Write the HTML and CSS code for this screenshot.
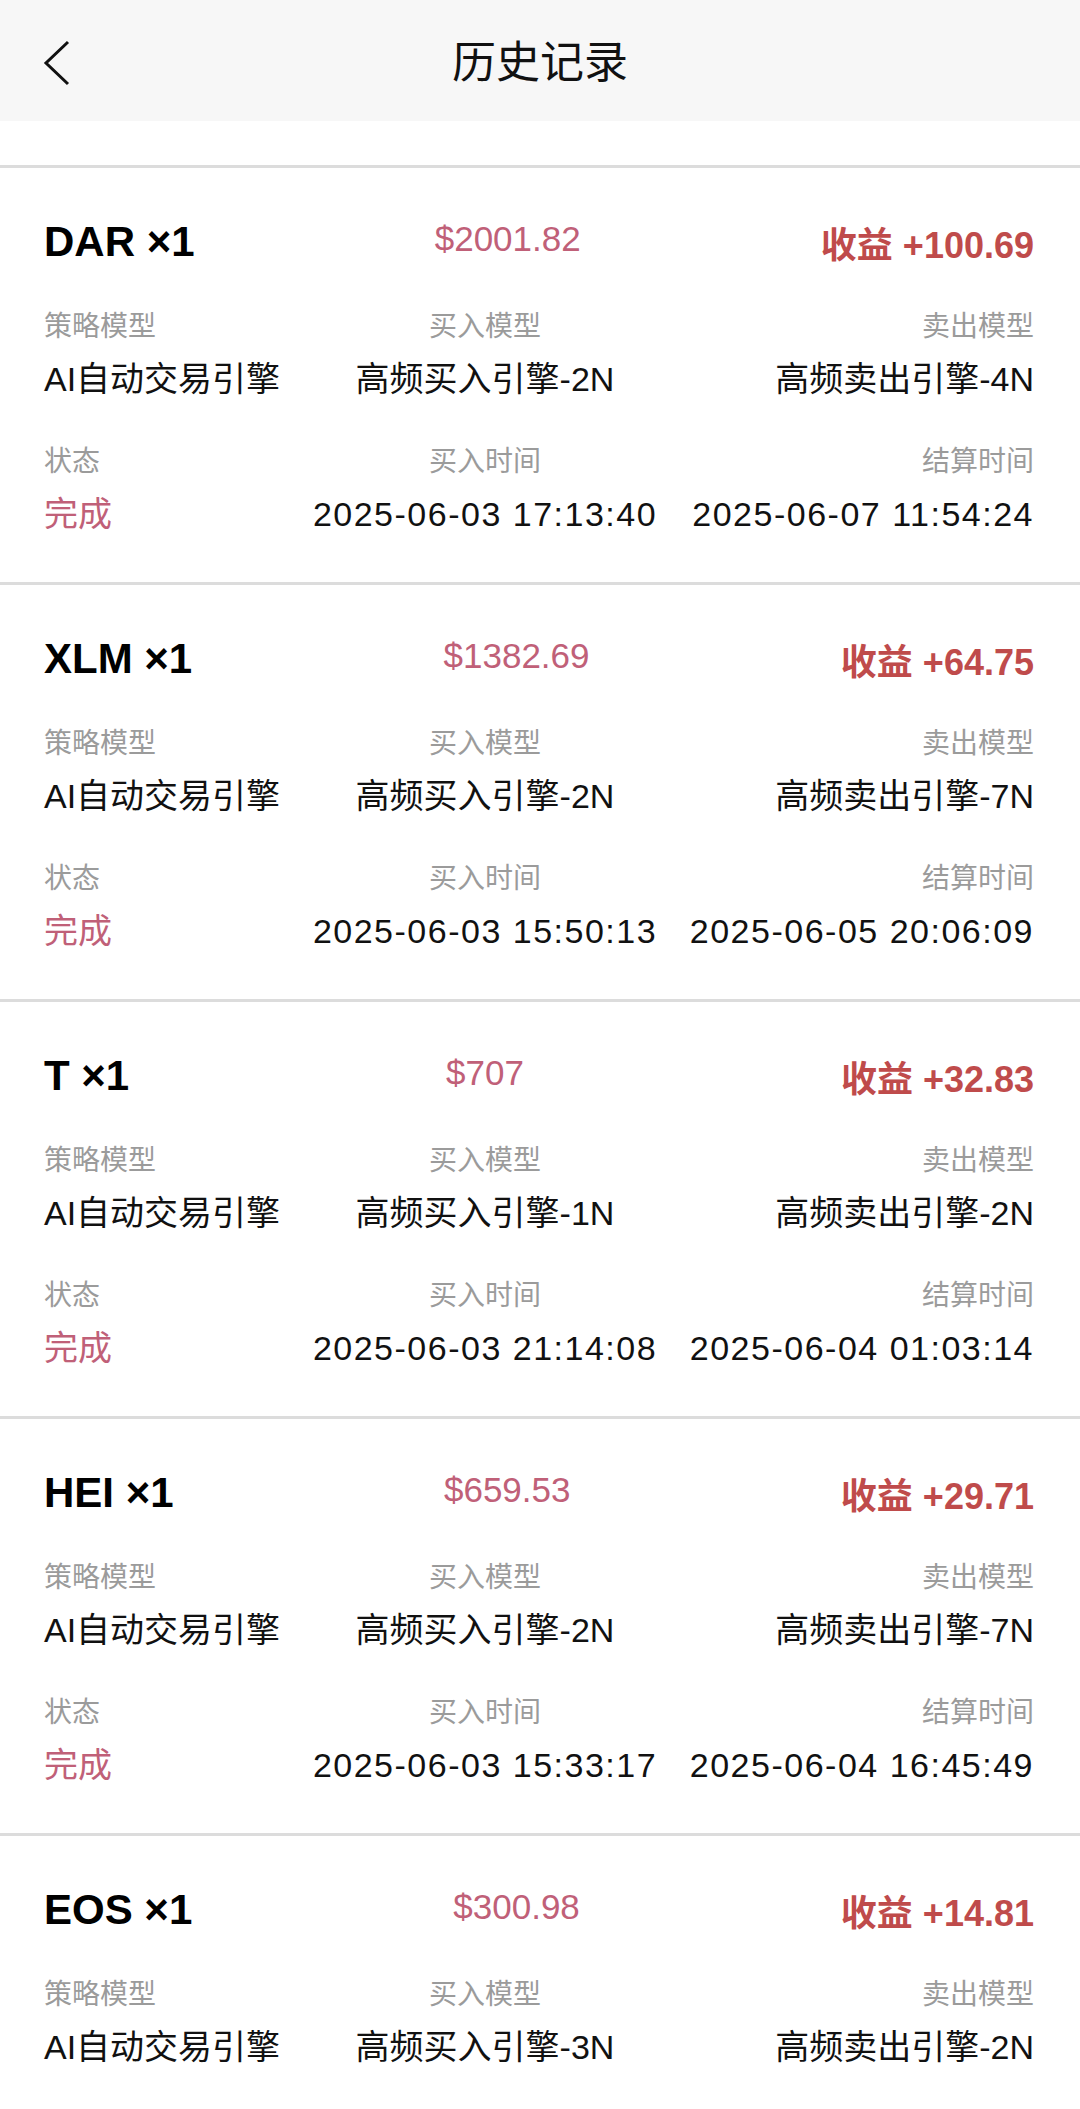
FILE: index.html
```html
<!DOCTYPE html>
<html lang="zh-CN">
<head>
    <meta charset="UTF-8">
    <meta name="viewport" content="width=device-width, initial-scale=1.0">
    <title>历史记录</title>
    <link rel="stylesheet" href="styles.css">
</head>
<body>
    <div class="nav-bar">
        <div class="nav-back">
            <svg width="28" height="46" viewBox="0 0 28 46">
                <polyline points="25,2 3,23 25,44" fill="none" stroke="#111" stroke-width="3" stroke-linejoin="miter"/>
            </svg>
        </div>
        <div class="nav-title">历史记录</div>
        <div></div>
    </div>

    <div class="record-list">
        <div class="record">
            <div class="record-head">
                <span class="symbol">DAR ×1</span>
                <span class="price">$2001.82</span>
                <span class="profit">收益 +100.69</span>
            </div>
            <div class="fields">
                <div class="field"><div class="label">策略模型</div><div class="value">AI自动交易引擎</div></div>
                <div class="field"><div class="label">买入模型</div><div class="value">高频买入引擎-2N</div></div>
                <div class="field"><div class="label">卖出模型</div><div class="value">高频卖出引擎-4N</div></div>
            </div>
            <div class="fields">
                <div class="field"><div class="label">状态</div><div class="value done">完成</div></div>
                <div class="field"><div class="label">买入时间</div><div class="value time">2025-06-03 17:13:40</div></div>
                <div class="field"><div class="label">结算时间</div><div class="value time">2025-06-07 11:54:24</div></div>
            </div>
        </div>

        <div class="record">
            <div class="record-head">
                <span class="symbol">XLM ×1</span>
                <span class="price">$1382.69</span>
                <span class="profit">收益 +64.75</span>
            </div>
            <div class="fields">
                <div class="field"><div class="label">策略模型</div><div class="value">AI自动交易引擎</div></div>
                <div class="field"><div class="label">买入模型</div><div class="value">高频买入引擎-2N</div></div>
                <div class="field"><div class="label">卖出模型</div><div class="value">高频卖出引擎-7N</div></div>
            </div>
            <div class="fields">
                <div class="field"><div class="label">状态</div><div class="value done">完成</div></div>
                <div class="field"><div class="label">买入时间</div><div class="value time">2025-06-03 15:50:13</div></div>
                <div class="field"><div class="label">结算时间</div><div class="value time">2025-06-05 20:06:09</div></div>
            </div>
        </div>

        <div class="record">
            <div class="record-head">
                <span class="symbol">T ×1</span>
                <span class="price">$707</span>
                <span class="profit">收益 +32.83</span>
            </div>
            <div class="fields">
                <div class="field"><div class="label">策略模型</div><div class="value">AI自动交易引擎</div></div>
                <div class="field"><div class="label">买入模型</div><div class="value">高频买入引擎-1N</div></div>
                <div class="field"><div class="label">卖出模型</div><div class="value">高频卖出引擎-2N</div></div>
            </div>
            <div class="fields">
                <div class="field"><div class="label">状态</div><div class="value done">完成</div></div>
                <div class="field"><div class="label">买入时间</div><div class="value time">2025-06-03 21:14:08</div></div>
                <div class="field"><div class="label">结算时间</div><div class="value time">2025-06-04 01:03:14</div></div>
            </div>
        </div>

        <div class="record">
            <div class="record-head">
                <span class="symbol">HEI ×1</span>
                <span class="price">$659.53</span>
                <span class="profit">收益 +29.71</span>
            </div>
            <div class="fields">
                <div class="field"><div class="label">策略模型</div><div class="value">AI自动交易引擎</div></div>
                <div class="field"><div class="label">买入模型</div><div class="value">高频买入引擎-2N</div></div>
                <div class="field"><div class="label">卖出模型</div><div class="value">高频卖出引擎-7N</div></div>
            </div>
            <div class="fields">
                <div class="field"><div class="label">状态</div><div class="value done">完成</div></div>
                <div class="field"><div class="label">买入时间</div><div class="value time">2025-06-03 15:33:17</div></div>
                <div class="field"><div class="label">结算时间</div><div class="value time">2025-06-04 16:45:49</div></div>
            </div>
        </div>

        <div class="record">
            <div class="record-head">
                <span class="symbol">EOS ×1</span>
                <span class="price">$300.98</span>
                <span class="profit">收益 +14.81</span>
            </div>
            <div class="fields">
                <div class="field"><div class="label">策略模型</div><div class="value">AI自动交易引擎</div></div>
                <div class="field"><div class="label">买入模型</div><div class="value">高频买入引擎-3N</div></div>
                <div class="field"><div class="label">卖出模型</div><div class="value">高频卖出引擎-2N</div></div>
            </div>
        </div>
    </div>
</body>
</html>
```

FILE: styles.css
```css
body {
    margin: 0;
    background: #fff;
    font-family: "Liberation Sans", "Noto Sans CJK SC", sans-serif;
    color: #111;
}
.nav-bar {
    height: 121px;
    background: #f7f7f7;
    display: grid;
    grid-template-columns: 1fr auto 1fr;
    align-items: center;
}
.nav-back {
    padding-left: 43px;
    padding-top: 4px;
    display: flex;
}
.nav-title {
    font-size: 44px;
    line-height: 60px;
    padding-top: 4px;
    color: #111;
}
.record-list {
    padding-top: 44px;
}
.record {
    border-top: 3px solid #dcdcdc;
    padding: 44px 46px 46px 44px;
}
.record-head {
    display: flex;
    justify-content: space-between;
    align-items: center;
    height: 60px;
    margin-bottom: 35px;
}
.symbol {
    font-size: 42px;
    font-weight: bold;
    color: #000;
}
.price {
    font-size: 35px;
    color: #c06078;
    margin-bottom: 6px;
}
.profit {
    font-size: 36px;
    font-weight: bold;
    color: #bf4b4b;
}
.fields {
    display: grid;
    grid-template-columns: 250px 382px 1fr;
}
.fields + .fields {
    margin-top: 41px;
}
.field:nth-child(2) {
    text-align: center;
}
.field:nth-child(3) {
    text-align: right;
}
.label {
    font-size: 28px;
    line-height: 40px;
    color: #9b9b9b;
}
.value {
    font-size: 34px;
    line-height: 44px;
    margin-top: 10px;
    white-space: nowrap;
    color: #111;
}
.value.time {
    letter-spacing: 1.5px;
}
.value.done {
    color: #c06078;
}
```
